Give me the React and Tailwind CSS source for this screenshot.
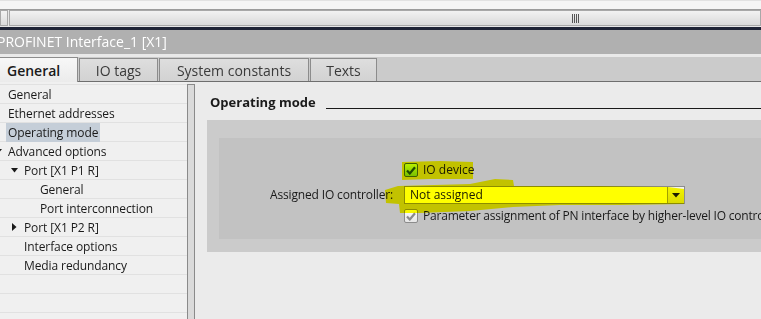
import React from "react";

const F = "font-['Open_Sans','Noto_Sans',sans-serif]";

function TreeRow({ indent, children, tri, selected }) {
  return (
    <div className="h-[19px] border-b border-[#e1e1e1] flex items-center relative">
      {tri === "down" && (
        <svg className="absolute" style={{ left: indent - 13, top: 7 }} width="7" height="5" viewBox="0 0 7 5">
          <path d="M0 0 L7 0 L3.5 4.5 Z" fill="#1a1a1a" />
        </svg>
      )}
      {tri === "right" && (
        <svg className="absolute" style={{ left: indent - 12, top: 5 }} width="5" height="8" viewBox="0 0 5 8">
          <path d="M0 0 L4.5 4 L0 8 Z" fill="#1a1a1a" />
        </svg>
      )}
      <span
        className={`text-[12px] leading-[19px] text-[#1a1a1a] whitespace-nowrap tracking-[-0.1px] ${selected ? "bg-[#c5ced8] px-[2px] -ml-[2px]" : ""}`}
        style={{ marginLeft: selected ? indent - 2 : indent }}
      >
        {children}
      </span>
    </div>
  );
}

function CheckGreen() {
  return (
    <div className="w-[14px] h-[14px] rounded-[2px] border border-[#3f5f80] bg-gradient-to-b from-[#b8f040] to-[#78c000] flex items-center justify-center shrink-0">
      <svg width="10" height="9" viewBox="0 0 10 9">
        <path d="M1 4.5 L3.8 7.5 L9 1.2" stroke="#1f4a00" strokeWidth="2.2" fill="none" />
      </svg>
    </div>
  );
}

function CheckGray() {
  return (
    <div className="w-[14px] h-[14px] rounded-[2px] border border-[#8c8c8c] bg-gradient-to-b from-[#fbfbfb] to-[#e6e6e6] flex items-center justify-center shrink-0">
      <svg width="10" height="9" viewBox="0 0 10 9">
        <path d="M1 4.5 L3.8 7.5 L9 1.2" stroke="#8a8a8a" strokeWidth="2.2" fill="none" />
      </svg>
    </div>
  );
}

export default function App() {
  return (
    <div className={`w-[761px] h-[319px] overflow-hidden relative bg-[#ebebeb] flex flex-col ${F}`}>
      {/* top strip */}
      <div className="h-[9px] bg-[#f5f5f5] border-t border-[#e2e2e2] shrink-0" />
      <div className="h-[18px] border-t border-[#9c9c9c] flex shrink-0 bg-[#e6e6e6]">
        <div className="w-[8px] h-[16px] border border-[#a8a8a8] bg-gradient-to-b from-[#f2f2f2] to-[#dcdcdc]" />
        <div className="flex-1 h-[16px] ml-[1px] border border-[#a8a8a8] bg-gradient-to-b from-[#f2f2f2] to-[#dadada] flex items-center">
          <div className="ml-[562px] flex gap-[1px] h-[9px]">
            <div className="w-[1px] bg-[#555]" />
            <div className="w-[1px] bg-[#555]" />
            <div className="w-[1px] bg-[#555]" />
            <div className="w-[1px] bg-[#555]" />
          </div>
        </div>
      </div>
      <div className="h-[3px] bg-[#1f2436] shrink-0" />
      {/* title */}
      <div className="h-[24px] bg-[#b0b0b0] flex items-center shrink-0">
        <span className="text-[14px] text-white whitespace-nowrap -ml-[3px] leading-[24px]">PROFINET Interface_1 [X1]</span>
      </div>
      <div className="h-[3px] bg-[#e9e9e9] shrink-0" />
      {/* tabs */}
      <div className="h-[25px] bg-[#cbcbcb] border-b border-[#6e6e6e] flex items-end shrink-0 relative">
        <div className="w-[78px] h-[25px] -mb-[1px] bg-gradient-to-b from-[#f7f7f7] to-[#ebebeb] border-r border-t border-[#8c8c8c] flex items-center pl-[7px] text-[14px] font-semibold text-[#1a1a1a] relative z-10">
          General
        </div>
        <div className="w-[79px] h-[23px] ml-[1px] bg-gradient-to-b from-[#dedede] to-[#d2d2d2] border border-b-0 border-[#8c8c8c] flex items-center justify-center text-[14px] text-[#3a3a3a]">
          IO tags
        </div>
        <div className="w-[150px] h-[23px] ml-[1px] bg-gradient-to-b from-[#dedede] to-[#d2d2d2] border border-b-0 border-[#8c8c8c] flex items-center justify-center text-[14px] text-[#3a3a3a]">
          System constants
        </div>
        <div className="w-[67px] h-[23px] ml-[1px] bg-gradient-to-b from-[#dedede] to-[#d2d2d2] border border-b-0 border-[#8c8c8c] flex items-center justify-center text-[14px] text-[#3a3a3a]">
          Texts
        </div>
      </div>
      {/* body */}
      <div className="flex-1 flex min-h-0">
        <div className="w-[187px] bg-[#f0f0f0] pt-[2px] shrink-0">
          <div className="border-t border-[#e1e1e1]" />
          <TreeRow indent={8}>General</TreeRow>
          <TreeRow indent={8}>Ethernet addresses</TreeRow>
          <TreeRow indent={8} selected>Operating mode</TreeRow>
          <TreeRow indent={8} tri="down">Advanced options</TreeRow>
          <TreeRow indent={24} tri="down">Port [X1 P1 R]</TreeRow>
          <TreeRow indent={40}>General</TreeRow>
          <TreeRow indent={40}>Port interconnection</TreeRow>
          <TreeRow indent={24} tri="right">Port [X1 P2 R]</TreeRow>
          <TreeRow indent={24}>Interface options</TreeRow>
          <TreeRow indent={24}>Media redundancy</TreeRow>
          <TreeRow indent={24}>{""}</TreeRow>
          <TreeRow indent={24}>{""}</TreeRow>
        </div>
        <div className="w-[8px] mt-[2px] border border-b-0 border-[#8a8a8a] bg-[#dadada] shrink-0" />
        <div className="flex-1 bg-[#ebebeb] flex flex-col min-w-0">
          <div className="flex items-end h-[29px] pl-[15px]">
            <span className="text-[13px] font-bold text-[#1a1a1a] leading-[16px] mb-[1px] whitespace-nowrap">Operating mode</span>
            <div className="flex-1 ml-[10px] h-[1px] bg-[#1a1a1a] mb-[2px]" />
          </div>
          <div className="mt-[9px] ml-[12px] bg-[#cbcbcb] pt-[18px] pb-[13px]">
            <div className="ml-[12px] bg-[#c2c2c2] h-[101px] pt-[25px] flex flex-col">
              <div className="flex items-center h-[14px]">
                <div className="w-[185px] shrink-0" />
                <CheckGreen />
                <span className="ml-[5px] text-[12px] text-[#1a1a1a] whitespace-nowrap">IO device</span>
              </div>
              <div className="flex items-center h-[18px] mt-[9px]">
                <div className="w-[174px] shrink-0 text-right text-[12px] tracking-[-0.15px] text-[#1a1a1a] whitespace-nowrap">Assigned IO controller:</div>
                <div className="ml-[11px] w-[281px] h-[18px] bg-white border border-[#8c8c8c] flex shrink-0">
                  <span className="flex-1 pl-[5px] text-[12px] leading-[16px] text-[#1a1a1a]">Not assigned</span>
                  <div className="w-[17px] border-l border-[#a0a0a0] bg-gradient-to-b from-[#f4f4f4] to-[#dcdcdc] flex items-center justify-center">
                    <svg width="8" height="5" viewBox="0 0 8 5"><path d="M0 0 L8 0 L4 4.5 Z" fill="#1a1a1a" /></svg>
                  </div>
                </div>
              </div>
              <div className="flex items-center h-[14px] mt-[5px]">
                <div className="w-[185px] shrink-0" />
                <CheckGray />
                <span className="ml-[5px] text-[12px] tracking-[-0.2px] text-[#1a1a1a] whitespace-nowrap">Parameter assignment of PN interface by higher-level IO controller</span>
              </div>
            </div>
          </div>
        </div>
      </div>
      {/* yellow marker highlight */}
      <svg className="absolute left-0 top-0 mix-blend-multiply pointer-events-none" width="761" height="319" viewBox="0 0 761 319">
        <path d="M402 162 L440 161 L473 162 L473 179 L430 179 L402 180 Z" fill="#ffff00" />
        <path d="M385 190 L398 186 L470 184 L495 179 L513 180 L514 186 L600 186 L668 187 L684 189 L684 204 L620 205 L560 205 L513 207 L470 211 L420 213 L400 213 L399 204 L386 203 Z" fill="#ffff00" />
      </svg>
    </div>
  );
}
